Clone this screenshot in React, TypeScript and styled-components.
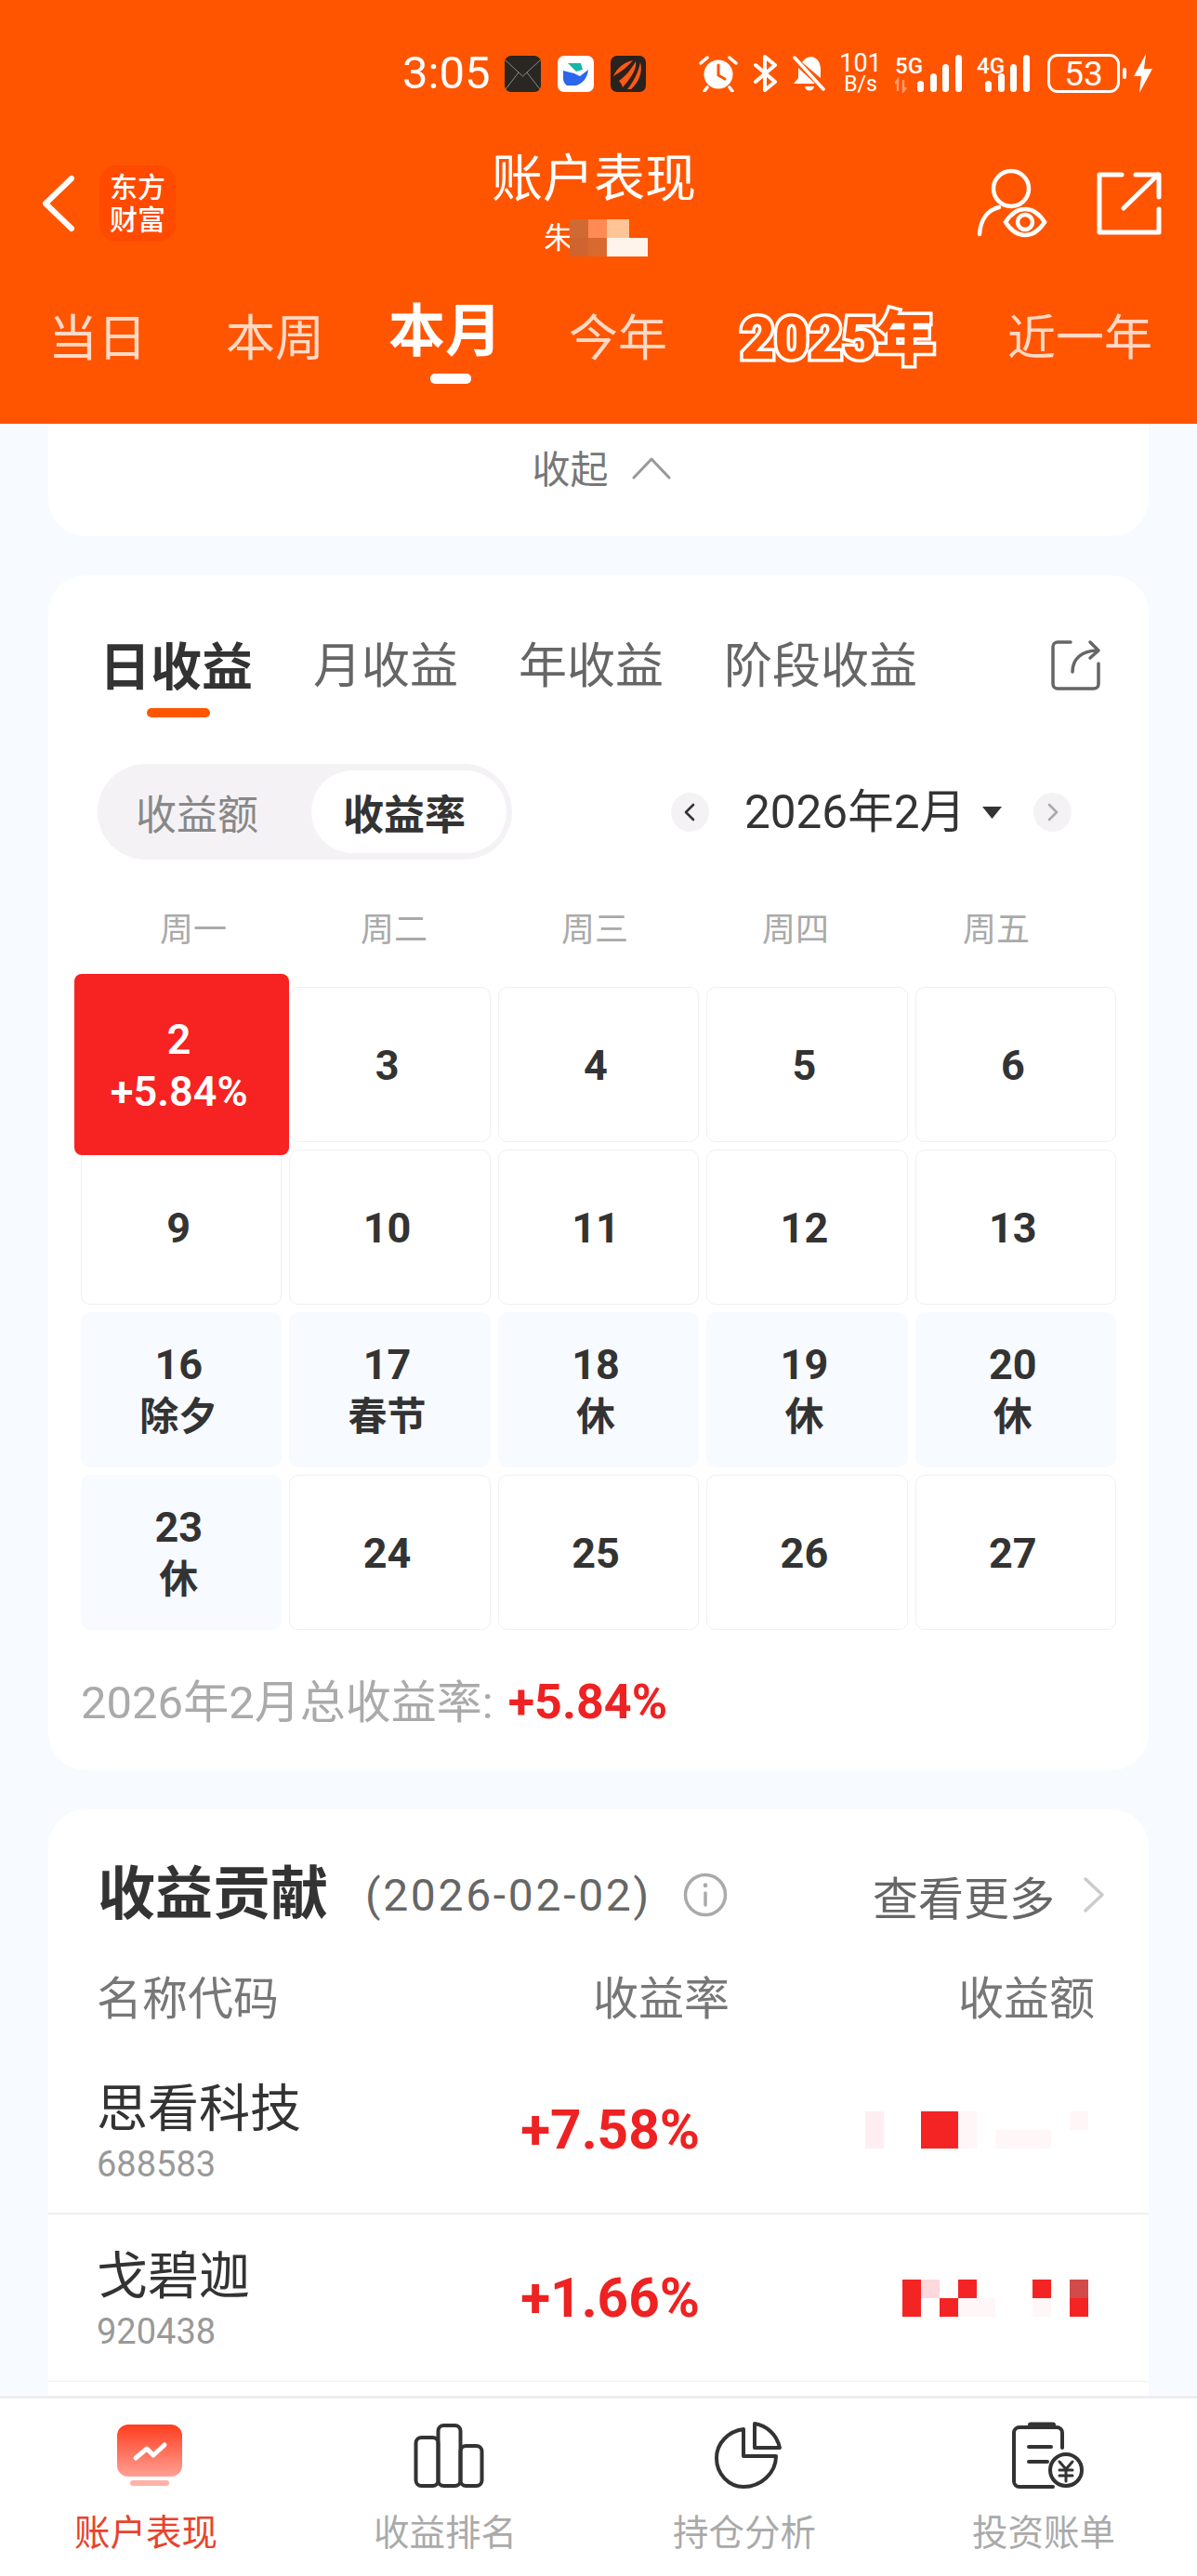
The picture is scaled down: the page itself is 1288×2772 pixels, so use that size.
import React from "react";
import styled, { createGlobalStyle } from "styled-components";

const ORANGE = "#ff5500";
const RED = "#ee2222";

const GlobalStyle = createGlobalStyle`
  * { box-sizing: border-box; }
  html, body { margin: 0; padding: 0; background: #f7faff; }
  body { font-family: Roboto, "Noto Sans CJK SC", sans-serif; }
`;

type DayCell = { day: string; note?: string; kind?: "plain" | "rest" | "hit" };

const DAYS: DayCell[] = [
  { day: "2", note: "+5.84%", kind: "hit" },
  { day: "3" },
  { day: "4" },
  { day: "5" },
  { day: "6" },
  { day: "9" },
  { day: "10" },
  { day: "11" },
  { day: "12" },
  { day: "13" },
  { day: "16", note: "除夕", kind: "rest" },
  { day: "17", note: "春节", kind: "rest" },
  { day: "18", note: "休", kind: "rest" },
  { day: "19", note: "休", kind: "rest" },
  { day: "20", note: "休", kind: "rest" },
  { day: "23", note: "休", kind: "rest" },
  { day: "24" },
  { day: "25" },
  { day: "26" },
  { day: "27" },
];

const MOSAIC_COLORS: Record<string, string> = {
  r: "#f42424",
  k: "#ffd8de",
  p: "#ffeef1",
  q: "#fff6f8",
  d: "#d24a4a",
  ".": "transparent",
  a: "#d06a35",
  b: "#ff8a55",
  c: "#ffc596",
  e: "#d0642e",
  f: "#d86a30",
  w: "#fff4ec",
};

const HOLDINGS = [
  {
    name: "思看科技",
    code: "688583",
    rate: "+7.58%",
    blur: "p..rrq.....qp..rrq.qqq..",
  },
  {
    name: "戈碧迦",
    code: "920438",
    rate: "+1.66%",
    blur: "..rk.r...r.d..r.rqq..q.r",
  },
];

export default function App(): JSX.Element {
  return (
    <Page>
      <GlobalStyle />
      <Header>
        <StatusBar>
          <StatusGroup $gap={18}>
            <Clock>3:05</Clock>
            <MailIcon />
            <BlueAppIcon />
            <FanAppIcon />
          </StatusGroup>
          <StatusGroup $gap={16}>
            <AlarmIcon />
            <BluetoothIcon />
            <BellOffIcon />
            <NetSpeed>
              <b>101</b>
              <span>B/s</span>
            </NetSpeed>
            <Signal label="5G" arrows />
            <Signal label="4G" />
            <Battery>53</Battery>
            <BatteryNub />
            <BoltIcon />
          </StatusGroup>
        </StatusBar>

        <NavBar>
          <NavLeft>
            <svg width="36" height="62" viewBox="0 0 36 62" fill="none">
              <polyline points="32,4 4,31 32,58" stroke="#fff" strokeWidth="6" strokeLinecap="round" strokeLinejoin="round" />
            </svg>
            <LogoTile>
              <span>东方</span>
              <span>财富</span>
            </LogoTile>
          </NavLeft>
          <TitleBlock>
            <Title>账户表现</Title>
            <Subtitle>
              <span>朱</span>
              <Mosaic $cols={4}>
                {"abc.efww".split("").map((c, i) => (
                  <MosaicCell key={i} $color={MOSAIC_COLORS[c]} />
                ))}
              </Mosaic>
            </Subtitle>
          </TitleBlock>
          <NavRight>
            <svg width="76" height="76" viewBox="0 0 76 76" fill="none" stroke="#fff" strokeWidth="4.5" strokeLinecap="round">
              <circle cx="37" cy="22" r="19" />
              <path d="M24 42C12 45 4 55 3 71" />
              <path d="M31 58C38 47 46 44 52 44C58 44 66 47 73 58C66 69 58 72 52 72C46 72 38 69 31 58Z" fill={ORANGE} />
              <circle cx="52" cy="58" r="8" />
            </svg>
            <svg width="70" height="68" viewBox="0 0 70 68" fill="none" stroke="#fff" strokeWidth="5" strokeLinecap="round" strokeLinejoin="round">
              <path d="M27 3H3V65H67V40" />
              <path d="M29 39L66 3" />
              <path d="M42 3H67V27" />
            </svg>
          </NavRight>
        </NavBar>

        <PeriodRow>
          <PeriodTab $after={85}>当日</PeriodTab>
          <PeriodTab $after={69}>本周</PeriodTab>
          <PeriodTab $active $after={72}>本月</PeriodTab>
          <PeriodTab $after={79}>今年</PeriodTab>
          <OutlinedTab>2025年</OutlinedTab>
          <PeriodTab $small>近一年</PeriodTab>
        </PeriodRow>
      </Header>

      <Content>
        <CollapseCard>
          <CollapseText>收起</CollapseText>
          <svg width="42" height="24" viewBox="0 0 42 24" fill="none">
            <polyline points="2,22 21,2 40,22" stroke="#999" strokeWidth="3" strokeLinecap="round" strokeLinejoin="round" />
          </svg>
        </CollapseCard>

        <CalendarCard>
          <CardTabs>
            <CardTab $active>日收益</CardTab>
            <CardTab>月收益</CardTab>
            <CardTab>年收益</CardTab>
            <CardTab>阶段收益</CardTab>
            <ShareButton>
              <svg width="56" height="56" viewBox="0 0 56 56" fill="none" stroke="#666" strokeWidth="3.5" strokeLinecap="round" strokeLinejoin="round">
                <path d="M22 3H8a5 5 0 0 0-5 5V48a5 5 0 0 0 5 5H47a5 5 0 0 0 5-5V26" />
                <path d="M24 35C24 21 34 12 51 12" />
                <path d="M43 3L52 12L43 20" />
              </svg>
            </ShareButton>
          </CardTabs>

          <ControlRow>
            <Segmented>
              <Segment>收益额</Segment>
              <Segment $active>收益率</Segment>
            </Segmented>
            <MonthPicker>
              <MonthStep>
                <svg width="12" height="20" viewBox="0 0 12 20" fill="none">
                  <polyline points="10,2 2,10 10,18" stroke="#333" strokeWidth="2.6" strokeLinecap="round" strokeLinejoin="round" />
                </svg>
              </MonthStep>
              <MonthLabel>2026年2月</MonthLabel>
              <svg width="23" height="14" viewBox="0 0 23 14">
                <polygon points="1,1 22,1 11.5,14" fill="#333" />
              </svg>
              <MonthStep>
                <svg width="12" height="20" viewBox="0 0 12 20" fill="none">
                  <polyline points="2,2 10,10 2,18" stroke="#aaa" strokeWidth="2.6" strokeLinecap="round" strokeLinejoin="round" />
                </svg>
              </MonthStep>
            </MonthPicker>
          </ControlRow>

          <WeekRow>
            {["周一", "周二", "周三", "周四", "周五"].map((d) => (
              <WeekDay key={d}>{d}</WeekDay>
            ))}
          </WeekRow>

          <DayGrid>
            {DAYS.map((d) => (
              <Day key={d.day} $kind={d.kind || "plain"}>
                <span>{d.day}</span>
                {d.note && <span>{d.note}</span>}
              </Day>
            ))}
          </DayGrid>

          <Summary>
            2026年2月总收益率: <strong>+5.84%</strong>
          </Summary>
        </CalendarCard>

        <ContributionCard>
          <ContributionHead>
            <ContributionTitle>收益贡献</ContributionTitle>
            <ContributionDate>(2026-02-02)</ContributionDate>
            <InfoWrap>
              <svg width="48" height="48" viewBox="0 0 48 48" fill="none" stroke="#aaa" strokeWidth="3.5" strokeLinecap="round">
                <circle cx="24" cy="24" r="21.5" />
                <path d="M24 22V35" />
                <path d="M24 13.5V14" strokeWidth="4.5" />
              </svg>
            </InfoWrap>
            <MoreLink>查看更多</MoreLink>
            <svg width="24" height="38" viewBox="0 0 24 38" fill="none">
              <polyline points="3,2 21,19 3,36" stroke="#ccc" strokeWidth="3.5" strokeLinecap="round" strokeLinejoin="round" />
            </svg>
          </ContributionHead>

          <ColumnHead>
            <span>名称代码</span>
            <span>收益率</span>
            <span>收益额</span>
          </ColumnHead>

          {HOLDINGS.map((h) => (
            <HoldingRow key={h.code}>
              <HoldingName>
                <strong>{h.name}</strong>
                <span>{h.code}</span>
              </HoldingName>
              <HoldingRate>{h.rate}</HoldingRate>
              <Mosaic $cols={12}>
                {h.blur.split("").map((c, i) => (
                  <MosaicCell key={i} $color={MOSAIC_COLORS[c]} />
                ))}
              </Mosaic>
            </HoldingRow>
          ))}
        </ContributionCard>
      </Content>

      <TabBar>
        <TabItem $active>
          <TabIcon>
            <svg width="70" height="66" viewBox="0 0 70 66" fill="none">
              <defs>
                <linearGradient id="tabGrad" x1="0" y1="0" x2="0" y2="1">
                  <stop offset="0" stopColor="#ff3c1e" />
                  <stop offset="1" stopColor="#ffa093" />
                </linearGradient>
              </defs>
              <rect x="0" y="0" width="70" height="56" rx="12" fill="url(#tabGrad)" />
              <rect x="14" y="60" width="42" height="6" rx="3" fill="#ffb2a8" />
              <polyline points="20,36 32,26 39,33 51,22" stroke="#fff" strokeWidth="5" strokeLinecap="round" strokeLinejoin="round" />
            </svg>
          </TabIcon>
          账户表现
        </TabItem>
        <TabItem>
          <TabIcon>
            <svg width="76" height="70" viewBox="0 0 76 70" fill="none" stroke="#333" strokeWidth="4" strokeLinejoin="round">
              <rect x="2.5" y="16" width="24" height="52" rx="6" />
              <rect x="26.5" y="3" width="24" height="65" rx="6" />
              <rect x="50.5" y="25" width="23" height="43" rx="6" />
            </svg>
          </TabIcon>
          收益排名
        </TabItem>
        <TabItem>
          <TabIcon>
            <svg width="76" height="74" viewBox="0 0 76 74" fill="none" stroke="#333" strokeWidth="4" strokeLinejoin="round">
              <path d="M33 9C17 11 4 24 4 40C4 57 17 71 33 71C52 71 68 56 68 38H33Z" />
              <path d="M45 3C58 5 69 15 72 29H45Z" />
            </svg>
          </TabIcon>
          持仓分析
        </TabItem>
        <TabItem>
          <TabIcon>
            <svg width="80" height="76" viewBox="0 0 80 76" fill="none" stroke="#333" strokeWidth="4" strokeLinecap="round">
              <path d="M56 30V14a6 6 0 0 0-6-6H10a6 6 0 0 0-6 6V66a6 6 0 0 0 6 6H46" />
              <path d="M22 5.5H46" strokeWidth="6" />
              <path d="M20 29H44" />
              <path d="M20 45H40" />
              <circle cx="60" cy="54" r="17" fill="#fff" />
              <path d="M53 45L60 53L67 45M60 53V66M53 54H67M53 60H67" strokeWidth="3" strokeLinejoin="round" />
            </svg>
          </TabIcon>
          投资账单
        </TabItem>
      </TabBar>
    </Page>
  );
}

const Signal = ({ label, arrows }: { label: string; arrows?: boolean }): JSX.Element => {
  const wide = !!arrows;
  return (
    <SignalWrap $wide={wide}>
      <SignalLabel>{label}</SignalLabel>
      <svg width={wide ? 72 : 60} height="42" viewBox={wide ? "0 0 72 42" : "0 0 60 42"} fill="#fff">
        {wide && (
          <path d="M3 40V28L0 32M9 28V40L12 36" stroke="#ff9a70" strokeWidth="2.4" fill="none" />
        )}
        <g transform={wide ? "translate(24 0)" : "translate(9 0)"}>
          <rect x="0" y="29" width="7" height="12" rx="3.5" />
          <rect x="14" y="21" width="7" height="20" rx="3.5" />
          <rect x="27" y="11" width="7" height="30" rx="3.5" />
          <rect x="41" y="1" width="7" height="40" rx="3.5" />
        </g>
      </svg>
    </SignalWrap>
  );
};

const MailIcon = () => (
  <svg width="39" height="39" viewBox="0 0 39 39">
    <rect width="39" height="39" rx="7" fill="#2a2622" />
    <path d="M1 5L19.5 22L38 5M1 36L15 18M38 36L24 18" fill="none" stroke="#8b8b8b" strokeWidth="1" />
  </svg>
);

const BlueAppIcon = () => (
  <svg width="39" height="39" viewBox="0 0 39 39">
    <rect width="39" height="39" rx="7" fill="#fff" />
    <path d="M11 8H25L27 15L20 17Z" fill="#19b5a5" />
    <path d="M6 16L18 19L24 22L33 15C32 24 27 30 20 32H10C7 30 6 27 6 24Z" fill="#2c66ea" />
  </svg>
);

const FanAppIcon = () => (
  <svg width="38" height="39" viewBox="0 0 38 39">
    <rect width="38" height="39" rx="7" fill="#2a221e" />
    <path d="M3 22C7 13 14 7 24 5C19 11 12 17 3 22Z" fill="#ff5a14" />
    <path d="M9 27C15 23 22 15 27 6C29 14 21 25 13 34C12 31 11 29 9 27Z" fill="#ff5a14" />
    <path d="M18 36C24 29 30 18 32 7C35 18 30 29 22 36Z" fill="#ff5a14" />
  </svg>
);

const AlarmIcon = () => (
  <svg width="42" height="40" viewBox="0 0 42 40" fill="none">
    <circle cx="21" cy="21" r="15.5" fill="#fff" />
    <path d="M21 11V22L28 26" stroke={ORANGE} strokeWidth="3" strokeLinejoin="round" strokeLinecap="round" />
    <path d="M2 9L9 3M40 9L33 3M9 35L6 39M33 35L36 39" stroke="#fff" strokeWidth="3.5" strokeLinecap="round" />
  </svg>
);

const BluetoothIcon = () => (
  <svg width="27" height="40" viewBox="0 0 27 40" fill="none">
    <path d="M3 11L24 29L13 38V2L24 11L3 29" stroke="#fff" strokeWidth="4" strokeLinejoin="round" strokeLinecap="round" />
  </svg>
);

const BellOffIcon = () => (
  <svg width="36" height="40" viewBox="0 0 36 40">
    <path d="M10 8C13 4 16 2 20 2C27 3 30 9 30 16V25Z" fill="#fff" />
    <path d="M6 14L24 31H1L6 25Z" fill="#fff" />
    <path d="M13 34H23C22 40 14 40 13 34Z" fill="#fff" />
    <path d="M2 3L33 37" stroke="#fff" strokeWidth="3.5" strokeLinecap="round" />
  </svg>
);

const BoltIcon = () => (
  <svg width="20" height="42" viewBox="0 0 20 42">
    <path d="M13 0L0 24H8L6 42L20 16H11Z" fill="#fff" />
  </svg>
);

const Page = styled.div`
  width: 1288px;
  height: 2772px;
  display: flex;
  flex-direction: column;
  overflow: hidden;
  background: #f7faff;
`;

const Header = styled.header`
  height: 456px;
  flex-shrink: 0;
  display: flex;
  flex-direction: column;
  background: ${ORANGE};
  color: #fff;
`;

const StatusBar = styled.div`
  height: 118px;
  padding: 58px 48px 0 433px;
  display: flex;
  justify-content: space-between;
  align-items: flex-start;
`;

const StatusGroup = styled.div<{ $gap: number }>`
  display: flex;
  align-items: center;
  gap: ${(p) => p.$gap}px;
  height: 42px;
`;

const Clock = styled.span`
  font-size: 49px;
  line-height: 42px;
  font-weight: 400;
  margin-right: -2px;
`;

const NetSpeed = styled.span`
  display: flex;
  flex-direction: column;
  align-items: center;
  width: 42px;
  line-height: 1;
  b {
    font-weight: 400;
    font-size: 27px;
    line-height: 23px;
  }
  span {
    font-size: 23px;
    line-height: 21px;
  }
`;

const SignalWrap = styled.span<{ $wide: boolean }>`
  position: relative;
  display: block;
  height: 42px;
  width: ${(p) => (p.$wide ? 72 : 60)}px;
`;

const SignalLabel = styled.span`
  position: absolute;
  left: 0;
  top: 2px;
  font-size: 24px;
  line-height: 22px;
  font-weight: 500;
`;

const Battery = styled.span`
  width: 78px;
  height: 42px;
  border: 3.5px solid #fff;
  border-radius: 11px;
  display: flex;
  align-items: center;
  justify-content: center;
  font-size: 37px;
  line-height: 1;
`;

const BatteryNub = styled.span`
  width: 4px;
  height: 12px;
  margin-left: -13px;
  margin-right: -8px;
  border-radius: 2px;
  background: #fff;
`;

const NavBar = styled.div`
  height: 202px;
  display: grid;
  grid-template-columns: 1fr auto 1fr;
  align-items: center;
`;

const NavLeft = styled.div`
  display: flex;
  align-items: center;
  gap: 26px;
  padding-left: 45px;
`;

const LogoTile = styled.div`
  width: 82px;
  height: 82px;
  border-radius: 18px;
  background: #ff4a00;
  display: flex;
  flex-direction: column;
  align-items: center;
  justify-content: center;
  font-size: 30px;
  line-height: 35px;
  font-weight: 500;
`;

const TitleBlock = styled.div`
  display: flex;
  flex-direction: column;
  align-items: center;
  margin-right: 10px;
`;

const Title = styled.div`
  font-size: 55px;
  line-height: 60px;
  font-weight: 400;
`;

const Subtitle = styled.div`
  margin-top: 14px;
  display: flex;
  align-items: center;
  height: 40px;
  font-size: 32px;
  line-height: 40px;
  span {
    margin-right: -4px;
  }
`;

const NavRight = styled.div`
  display: flex;
  align-items: center;
  justify-content: flex-end;
  gap: 53px;
  padding-right: 38px;
`;

const Mosaic = styled.div<{ $cols: number }>`
  display: grid;
  grid-template-columns: repeat(${(p) => p.$cols}, 20px);
  grid-auto-rows: 20px;
`;

const MosaicCell = styled.span<{ $color: string }>`
  background: ${(p) => p.$color};
`;

const PeriodRow = styled.div`
  display: flex;
  align-items: flex-start;
  padding: 2px 0 0 52px;
`;

const PeriodTab = styled.span<{ $active?: boolean; $after?: number; $small?: boolean }>`
  position: relative;
  font-size: ${(p) => (p.$active ? 61 : p.$small ? 52 : 53)}px;
  line-height: ${(p) => (p.$active ? 70 : 60)}px;
  font-weight: ${(p) => (p.$active ? 700 : 400)};
  margin-top: ${(p) => (p.$active ? 0 : 13)}px;
  margin-right: ${(p) => p.$after || 0}px;
  color: ${(p) => (p.$active ? "#fff" : "#ffd9c6")};

  ${(p) =>
    p.$active &&
    `
    &::after {
      content: "";
      position: absolute;
      left: 45px;
      top: 80px;
      width: 44px;
      height: 11px;
      border-radius: 5px;
      background: #fff;
    }
  `}
`;

const OutlinedTab = styled.span`
  font-size: 63px;
  line-height: 60px;
  font-weight: 900;
  margin-top: 13px;
  margin-right: 78px;
  color: ${ORANGE};
  -webkit-text-stroke: 7px #fff;
  paint-order: stroke fill;
`;

const Content = styled.main`
  flex: 1;
  min-height: 0;
  overflow: hidden;
  padding: 0 52px;
  display: flex;
  flex-direction: column;
  gap: 42px;
`;

const Card = styled.section`
  flex-shrink: 0;
  background: #fff;
  border-radius: 40px;
`;

const CollapseCard = styled(Card)`
  height: 121px;
  padding-top: 20px;
  padding-left: 6px;
  border-radius: 0 0 40px 40px;
  display: flex;
  justify-content: center;
  align-items: flex-start;
  gap: 25px;
  svg {
    margin-top: 16px;
  }
`;

const CollapseText = styled.span`
  font-size: 41px;
  line-height: 60px;
  color: #777;
`;

const CalendarCard = styled(Card)`
  padding: 49px 35px 42px;
`;

const CardTabs = styled.div`
  height: 104px;
  margin-left: 20px;
  display: flex;
  align-items: flex-start;
  gap: 65px;
`;

const CardTab = styled.span<{ $active?: boolean }>`
  position: relative;
  height: 104px;
  font-size: ${(p) => (p.$active ? 55 : 52)}px;
  line-height: 100px;
  font-weight: ${(p) => (p.$active ? 700 : 400)};
  color: ${(p) => (p.$active ? "#333" : "#666")};

  ${(p) =>
    p.$active &&
    `
    &::after {
      content: "";
      position: absolute;
      left: 51px;
      bottom: 0;
      width: 68px;
      height: 10px;
      border-radius: 5px;
      background: ${ORANGE};
    }
  `}
`;

const ShareButton = styled.span`
  margin-left: auto;
  margin-right: 15px;
  padding-top: 20px;
`;

const ControlRow = styled.div`
  margin-top: 50px;
  height: 103px;
  padding: 0 48px 0 18px;
  display: flex;
  align-items: center;
  justify-content: space-between;
`;

const Segmented = styled.div`
  width: 446px;
  height: 103px;
  padding: 7px 6px 7px 0;
  border-radius: 52px;
  background: #f5f2f6;
  display: flex;
  justify-content: space-between;
`;

const Segment = styled.span<{ $active?: boolean }>`
  width: ${(p) => (p.$active ? 210 : 230)}px;
  height: 89px;
  border-radius: 45px;
  background: ${(p) => (p.$active ? "#fff" : "transparent")};
  display: flex;
  align-items: center;
  justify-content: center;
  font-size: 44px;
  font-weight: ${(p) => (p.$active ? 700 : 400)};
  color: ${(p) => (p.$active ? "#333" : "#888")};
  padding-right: ${(p) => (p.$active ? 10 : 16)}px;
`;

const MonthPicker = styled.div`
  display: flex;
  align-items: center;
`;

const MonthStep = styled.span`
  width: 41px;
  height: 42px;
  border-radius: 50%;
  background: #f5f2f6;
  display: flex;
  align-items: center;
  justify-content: center;

  &:first-child {
    margin-right: 38px;
  }
  &:last-child {
    margin-left: 33px;
  }
`;

const MonthLabel = styled.span`
  font-size: 49.5px;
  line-height: 60px;
  color: #333;
  margin-right: 17px;
`;

const WeekRow = styled.div`
  margin: 50px 0 35px 13px;
  height: 52px;
  display: grid;
  grid-template-columns: repeat(5, 216px);
`;

const WeekDay = styled.span`
  text-align: center;
  font-size: 36px;
  line-height: 52px;
  color: #aaa;
`;

const DayGrid = styled.div`
  display: grid;
  grid-template-columns: repeat(5, 1fr);
  grid-auto-rows: 167px;
  gap: 8px;
`;

const Day = styled.div<{ $kind: "plain" | "rest" | "hit" }>`
  display: flex;
  flex-direction: column;
  align-items: center;
  justify-content: center;
  padding: 2px 6px 0 0;
  border-radius: ${(p) => (p.$kind === "hit" ? 8 : 10)}px;
  border: 1px solid ${(p) => (p.$kind === "plain" ? "#f0f0f0" : "transparent")};
  background: ${(p) => (p.$kind === "hit" ? "#f72222" : p.$kind === "rest" ? "#f7faff" : "#fff")};
  color: ${(p) => (p.$kind === "hit" ? "#fff" : "#333")};
  font-size: 45px;
  line-height: 56px;
  font-weight: 700;
  ${(p) => p.$kind === "hit" && "margin: -14px -8px -14px -7px; z-index: 1; font-weight: 600;"}

  span + span {
    font-size: ${(p) => (p.$kind === "hit" ? 45 : 42)}px;
  }
`;

const Summary = styled.div`
  margin-top: 48px;
  font-size: 49px;
  line-height: 60px;
  color: #aaa;
  strong {
    color: ${RED};
    font-size: 52px;
    font-weight: 700;
    margin-left: 4px;
  }
`;

const ContributionCard = styled(Card)`
  padding: 62px 0 90px;
`;

const ContributionHead = styled.div`
  height: 60px;
  padding: 0 47px 0 53px;
  display: flex;
  align-items: center;
`;

const ContributionTitle = styled.span`
  font-size: 62px;
  line-height: 60px;
  font-weight: 700;
  color: #333;
`;

const ContributionDate = styled.span`
  margin-left: 40px;
  font-size: 48px;
  letter-spacing: 2.7px;
  color: #666;
`;

const InfoWrap = styled.span`
  margin-left: 34px;
  height: 48px;
`;

const MoreLink = styled.span`
  margin-left: auto;
  margin-right: 30px;
  font-size: 49px;
  color: #666;
`;

const ColumnHead = styled.div`
  margin: 47px 0 27px;
  height: 60px;
  padding: 0 58px 0 52px;
  display: flex;
  align-items: center;
  font-size: 49px;
  color: #777;
  span:first-child {
    flex: 1;
  }
  span:nth-child(2) {
    margin-right: 246px;
  }
`;

const HoldingRow = styled.div`
  height: 180px;
  padding: 0 65px 0 52px;
  display: flex;
  align-items: center;
  border-bottom: 2px solid #f0f0f0;

  & + & {
    border-bottom-width: 1px;
  }
`;

const HoldingName = styled.div`
  flex: 1;
  padding-top: 3px;
  display: flex;
  flex-direction: column;
  strong {
    font-size: 55px;
    line-height: 60px;
    font-weight: 400;
    color: #333;
  }
  span {
    margin-top: 10px;
    font-size: 38px;
    line-height: 40px;
    color: #999;
  }
`;

const HoldingRate = styled.span`
  margin-right: 178px;
  font-size: 58.5px;
  font-weight: 700;
  color: ${RED};
`;

const TabBar = styled.nav`
  height: 194px;
  flex-shrink: 0;
  display: grid;
  grid-template-columns: repeat(4, 1fr);
  border-top: 3px solid #eeeeee;
  background: #fff;
`;

const TabItem = styled.div<{ $active?: boolean }>`
  display: flex;
  flex-direction: column;
  align-items: center;
  padding: 25px 8px 0 0;
  font-size: 38.5px;
  line-height: 40px;
  color: ${(p) => (p.$active ? "#e8432e" : "#aaa")};
`;

const TabIcon = styled.span`
  height: 72px;
  margin: 0 0 28px 8px;
  display: flex;
  align-items: center;
  justify-content: center;
`;
